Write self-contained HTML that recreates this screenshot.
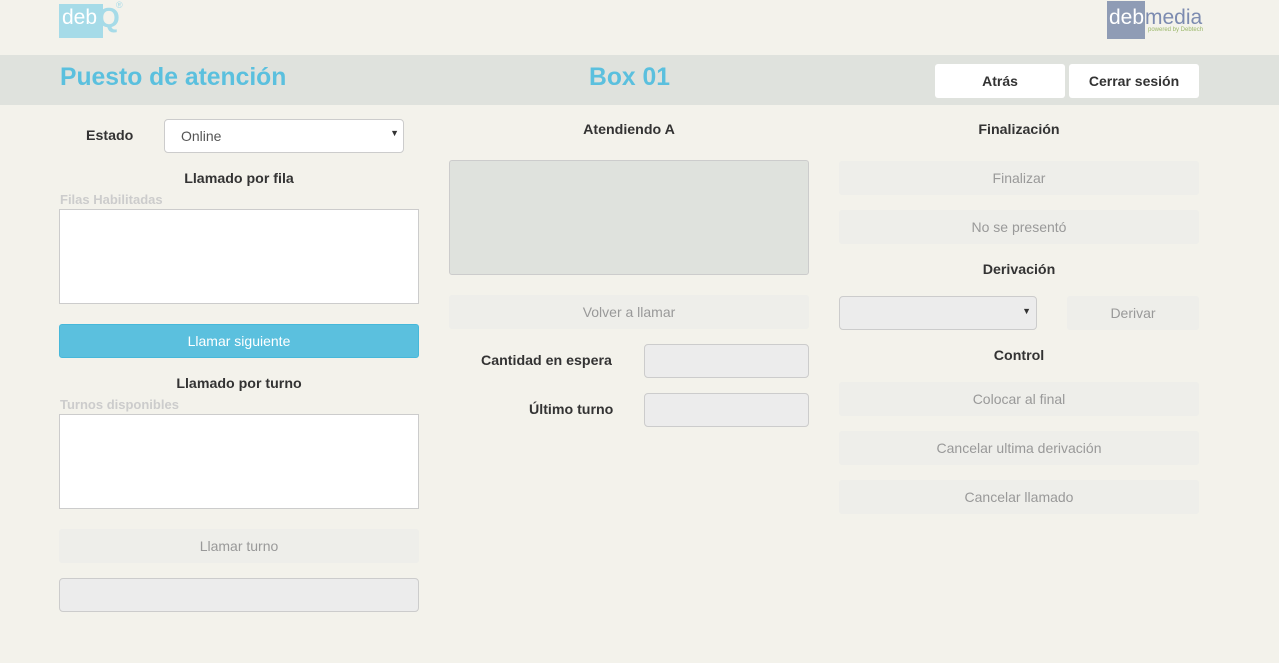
<!DOCTYPE html>
<html><head><meta charset="utf-8"><style>
*{box-sizing:border-box;margin:0;padding:0}
body{width:1279px;height:663px;background:#f3f2eb;font-family:"Liberation Sans",Arial,sans-serif;position:relative;overflow:hidden;font-size:14px;color:#333}
.a{position:absolute}
.bar{left:0;top:55px;width:1279px;height:50px;background:#dfe2dd}
.t{font-weight:bold;color:#5bc0de;font-size:24.7px}
.btnw{background:#fff;border-radius:3px;font-weight:bold;font-size:14px;text-align:center;line-height:34px;height:34px}
.lbl{font-weight:bold;font-size:14.2px;text-align:center;color:#333}
.dis{background:#eeeeea;color:#999;text-align:center;border-radius:3px;font-size:14px}
.inp{background:#ececec;border:1px solid #ccc;border-radius:4px}
.box{background:#fff;border:1px solid #ccc}
.ph{color:#ccc;font-weight:bold;font-size:13px}
</style></head><body>
<div class="a" style="left:59px;top:4px;width:44px;height:34px;background:#a6dbe8"></div>
<div class="a" style="left:62px;top:6px;color:#fff;font-size:21px">deb</div>
<div class="a" style="left:98px;top:2px;color:#a6dbe8;font-size:28px;font-weight:bold">Q</div>
<div class="a" style="left:116px;top:0;color:#a6dbe8;font-size:9px">®</div>
<div class="a" style="left:1107px;top:1px;width:38px;height:38px;background:#8f9cb5"></div>
<div class="a" style="left:1109px;top:6px;color:#fff;font-size:21px">deb</div>
<div class="a" style="left:1145px;top:6px;color:#7c8bb0;font-size:21px">media</div>
<div class="a" style="left:1148px;top:27px;color:#9bb86a;font-size:6px">powered by Debtech</div>
<div class="a bar"></div>
<div class="a t" style="left:60px;top:64px">Puesto de atención</div>
<div class="a t" style="left:589px;top:64px">Box 01</div>
<div class="a btnw" style="left:935px;top:64px;width:130px">Atrás</div>
<div class="a btnw" style="left:1069px;top:64px;width:130px">Cerrar sesión</div>

<div class="a lbl" style="left:86px;top:128px">Estado</div>
<div class="a" style="left:164px;top:119px;width:240px;height:34px;background:#fff;border:1px solid #ccc;border-radius:4px;padding:8px 16px;font-size:14px;color:#555">Online<span style="position:absolute;right:4px;top:8px;font-size:9px;color:#333">▼</span></div>
<div class="a lbl" style="left:59px;top:171px;width:360px">Llamado por fila</div>
<div class="a ph" style="left:60px;top:192px">Filas Habilitadas</div>
<div class="a box" style="left:59px;top:209px;width:360px;height:95px"></div>
<div class="a" style="left:59px;top:324px;width:360px;height:34px;background:#5bc0de;border:1px solid #46b8da;border-radius:3px;color:#fff;text-align:center;line-height:32px">Llamar siguiente</div>
<div class="a lbl" style="left:59px;top:376px;width:360px">Llamado por turno</div>
<div class="a ph" style="left:60px;top:397px">Turnos disponibles</div>
<div class="a box" style="left:59px;top:414px;width:360px;height:95px"></div>
<div class="a dis" style="left:59px;top:529px;width:360px;height:34px;line-height:34px">Llamar turno</div>
<div class="a inp" style="left:59px;top:578px;width:360px;height:34px"></div>

<div class="a lbl" style="left:449px;top:122px;width:360px">Atendiendo A</div>
<div class="a" style="left:449px;top:160px;width:360px;height:115px;background:#dfe2dd;border:1px solid #ccc;border-radius:3px"></div>
<div class="a dis" style="left:449px;top:295px;width:360px;height:34px;line-height:34px">Volver a llamar</div>
<div class="a lbl" style="left:481px;top:353px">Cantidad en espera</div>
<div class="a inp" style="left:644px;top:344px;width:165px;height:34px"></div>
<div class="a lbl" style="left:529px;top:402px">Último turno</div>
<div class="a inp" style="left:644px;top:393px;width:165px;height:34px"></div>

<div class="a lbl" style="left:839px;top:122px;width:360px">Finalización</div>
<div class="a dis" style="left:839px;top:161px;width:360px;height:34px;line-height:34px">Finalizar</div>
<div class="a dis" style="left:839px;top:210px;width:360px;height:34px;line-height:34px">No se presentó</div>
<div class="a lbl" style="left:839px;top:262px;width:360px">Derivación</div>
<div class="a inp" style="left:839px;top:296px;width:198px;height:34px"><span style="position:absolute;right:5px;top:9px;font-size:9px">▼</span></div>
<div class="a dis" style="left:1067px;top:296px;width:132px;height:34px;line-height:34px">Derivar</div>
<div class="a lbl" style="left:839px;top:348px;width:360px">Control</div>
<div class="a dis" style="left:839px;top:382px;width:360px;height:34px;line-height:34px">Colocar al final</div>
<div class="a dis" style="left:839px;top:431px;width:360px;height:34px;line-height:34px">Cancelar ultima derivación</div>
<div class="a dis" style="left:839px;top:480px;width:360px;height:34px;line-height:34px">Cancelar llamado</div>
</body></html>
